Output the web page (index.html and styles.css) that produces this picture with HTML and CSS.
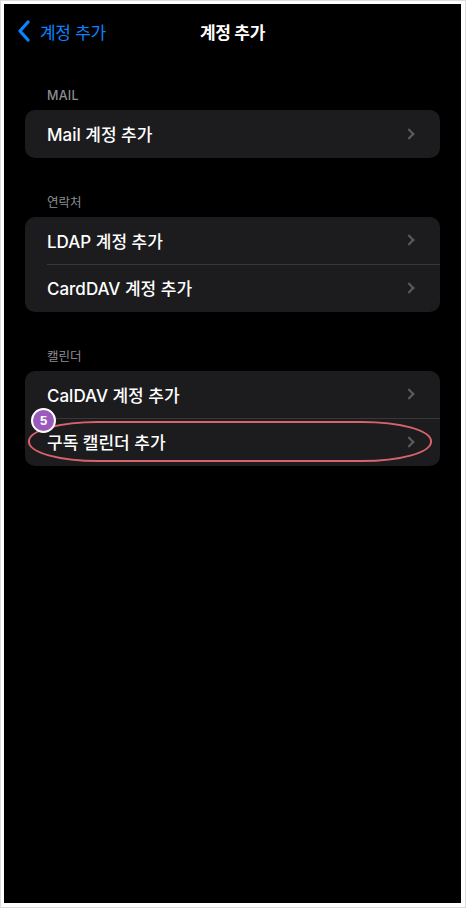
FILE: index.html
```html
<!DOCTYPE html>
<html lang="ko">
<head>
<meta charset="utf-8">
<link rel="stylesheet" href="styles.css">
</head>
<body>
<div class="frame">
  <div class="screen">
    <header class="nav">
      <a class="back">
        <svg width="14" height="22" viewBox="0 0 14 22"><path d="M11 2 L3 11 L11 20" fill="none" stroke="#0a84ff" stroke-width="3.2" stroke-linecap="round" stroke-linejoin="round"/></svg>
        <span>계정 추가</span>
      </a>
      <div class="title">계정 추가</div>
    </header>

    <section class="group">
      <div class="gh latin">MAIL</div>
      <div class="card">
        <div class="row"><span>Mail 계정 추가</span><i class="chev"></i></div>
      </div>
    </section>

    <section class="group">
      <div class="gh">연락처</div>
      <div class="card">
        <div class="row"><span>LDAP 계정 추가</span><i class="chev"></i></div>
        <div class="row"><span>CardDAV 계정 추가</span><i class="chev"></i></div>
      </div>
    </section>

    <section class="group">
      <div class="gh">캘린더</div>
      <div class="card">
        <div class="row"><span>CalDAV 계정 추가</span><i class="chev"></i></div>
        <div class="row hl"><span>구독 캘린더 추가</span><i class="chev"></i>
          <div class="ring"></div>
          <div class="badge">5</div>
        </div>
      </div>
    </section>
  </div>
</div>
</body>
</html>
```
FILE: styles.css
```css
* { box-sizing: border-box; }
html, body { margin: 0; padding: 0; }
body {
  width: 466px; height: 908px;
  background: #fff;
  font-family: "Inter", "Noto Sans CJK KR", sans-serif;
}
.frame {
  width: 466px; height: 908px;
  border: 1px solid #dcdcdc;
  padding: 3px 4px 4px 3px;
  background: #fff;
}
.screen {
  width: 457px; height: 899px;
  background: #000;
  color: #fff;
  padding-top: 14px;
}
.nav {
  position: relative;
  height: 26px;
  display: flex;
  align-items: center;
  justify-content: center;
}
.back {
  position: absolute;
  left: 13px; top: 0;
  height: 26px;
  display: flex; align-items: center; gap: 9px;
  color: #0a84ff;
  font-size: 17px;
  letter-spacing: -0.3px;
}
.title {
  font-size: 17px;
  font-weight: 700;
  letter-spacing: -0.3px;
}
.group { padding: 0 21px 0 21px; }
.gh {
  color: #8d8d93;
  font-size: 12.5px;
  padding-left: 22px;
  height: 17px;
  line-height: 17px;
  margin-bottom: 6px;
}
.gh.latin { font-weight: 500; letter-spacing: 0.3px; }
.group:nth-of-type(1) { margin-top: 43px; }
.group + .group { margin-top: 36px; }
.card {
  background: #1c1c1e;
  border-radius: 10px;
}
.row {
  position: relative;
  height: 47.5px;
  display: flex;
  align-items: center;
  justify-content: space-between;
  padding: 0 25px 0 22px;
  font-size: 17px;
  font-weight: 500;
  letter-spacing: 0;
}
.row + .row::before {
  content: "";
  position: absolute;
  left: 22px; right: 0; top: 0;
  height: 1px;
  background: #38383a;
}
.chev {
  width: 8px; height: 8px;
  border-right: 2.5px solid #5b5b60;
  border-top: 2.5px solid #5b5b60;
  transform: rotate(45deg);
  margin-right: 2px;
}
.ring {
  position: absolute;
  left: 3px; right: 8px; top: 3px; bottom: 4px;
  border: 2px solid #d9636c;
  border-radius: 70px / 20px;
}
.badge {
  position: absolute;
  left: 6px; top: -10px;
  width: 25px; height: 25px;
  border-radius: 50%;
  background: #9a5bbd;
  border: 2px solid #fff;
  color: #fff;
  font-family: "Liberation Sans", Arial, sans-serif;
  font-weight: 700;
  font-size: 13px;
  display: flex; align-items: center; justify-content: center;
}
```
